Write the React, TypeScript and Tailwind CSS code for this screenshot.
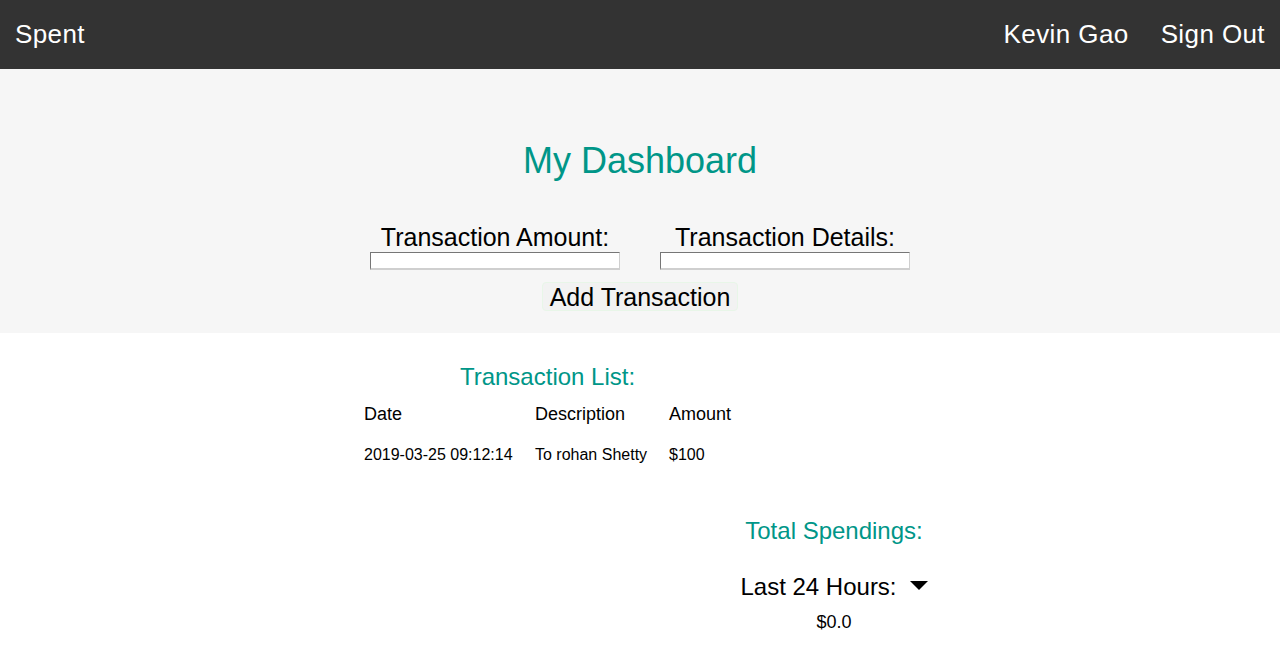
export default function App() {
  return (
    <div className="min-h-screen bg-white text-black font-['Liberation_Sans',Arial,sans-serif]">
      {/* Nav */}
      <div className="h-[69px] bg-[#333333] flex items-center justify-between px-[15px] text-[26px] tracking-[0.4px] text-white">
        <span>Spent</span>
        <div className="flex gap-[32px]">
          <span>Kevin Gao</span>
          <span>Sign Out</span>
        </div>
      </div>

      {/* Add form */}
      <div className="h-[264px] bg-[#f6f6f6] flex flex-col items-center pt-[72px]">
        <h1 className="text-[36px] leading-[40px] text-[#009688]">My Dashboard</h1>
        <div className="flex gap-[40px] mt-[42px]">
          <div className="w-[250px] flex flex-col items-center">
            <label className="text-[25px] leading-[28px]">Transaction Amount:</label>
            <input className="mt-[1px] w-[250px] h-[18px] bg-white border-t border-l border-b-2 border-r border-t-[#767676] border-l-[#767676] border-b-[#cfcfcf] border-r-[#cfcfcf] outline-none" />
          </div>
          <div className="w-[250px] flex flex-col items-center">
            <label className="text-[25px] leading-[28px]">Transaction Details:</label>
            <input className="mt-[1px] w-[250px] h-[18px] bg-white border-t border-l border-b-2 border-r border-t-[#767676] border-l-[#767676] border-b-[#cfcfcf] border-r-[#cfcfcf] outline-none" />
          </div>
        </div>
        <button className="mt-[12px] h-[29px] px-[7px] text-[25px] leading-[28px] bg-[#f2f2f2] border border-[#e8f6e8] rounded-[4px]">
          Add Transaction
        </button>
      </div>

      {/* Transaction list */}
      <div className="pt-[30px] ml-[364px] w-[367px]">
        <h2 className="text-center text-[24px] leading-[28px] text-[#009688]">Transaction List:</h2>
        <div className="grid grid-cols-[171px_134px_1fr] mt-[12px] text-[18px] leading-[22px]">
          <span>Date</span>
          <span>Description</span>
          <span>Amount</span>
        </div>
        <div className="grid grid-cols-[171px_134px_1fr] mt-[20px] text-[16px] leading-[20px]">
          <span>2019-03-25 09:12:14</span>
          <span>To rohan Shetty</span>
          <span>$100</span>
        </div>
      </div>

      {/* Totals */}
      <div className="mt-[52px] ml-[700px] w-[268px] flex flex-col items-center">
        <h2 className="text-[24px] leading-[28px] text-[#009688]">Total Spendings:</h2>
        <div className="mt-[28px] flex items-center text-[24px] leading-[28px]">
          <span>Last 24 Hours:</span>
          <svg className="ml-[13px] -mt-[4px]" width="18" height="9" viewBox="0 0 18 9">
            <path d="M0 0 L18 0 L9 9 Z" fill="#000" />
          </svg>
        </div>
        <div className="mt-[10px] text-[18px] leading-[22px]">$0.0</div>
      </div>
    </div>
  );
}
